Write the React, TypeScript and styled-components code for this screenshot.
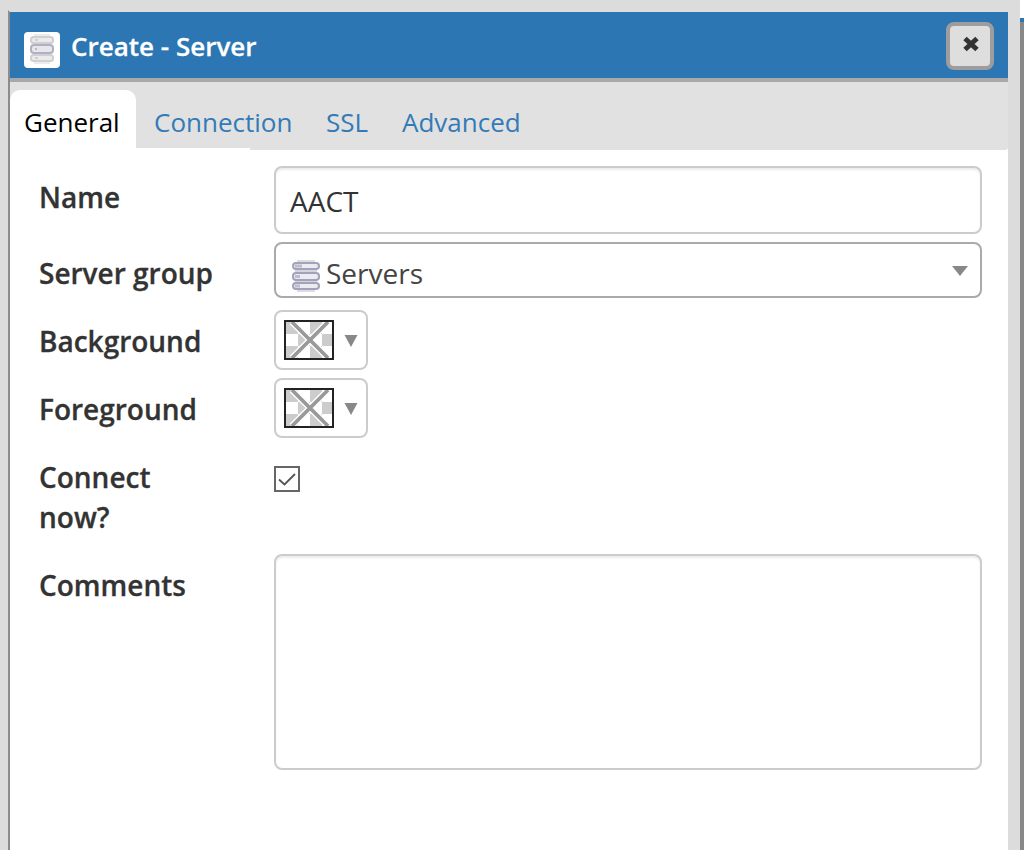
import React from "react";
import styled, { createGlobalStyle } from "styled-components";

const GlobalStyle = createGlobalStyle`
  *, *::before, *::after { box-sizing: border-box; }
  body { margin: 0; background: #dcdcdc; overflow: hidden; }
`;

const Page = styled.div`
  display: flex;
  width: 1024px;
  height: 850px;
  overflow: hidden;
  background: #dcdcdc;
  color: #333;
  font: 28px/40px "Open Sans", "Noto Sans", sans-serif;
`;

const Dialog = styled.section`
  display: flex;
  flex-direction: column;
  width: 1000px;
  margin: 10px 12px 0 8px;
  border-left: 2px solid #8c8c8c;
  border-top: 2px solid #dcdcdc;
  background: #fff;
`;

const Backdrop = styled.div`
  width: 4px;
  background: #888;
  border-top: 18px solid #fff;
`;

const BackdropBar = styled.div`
  height: 4px;
  background: #2c76b4;
`;

const Header = styled.header`
  display: flex;
  align-items: center;
  height: 70px;
  padding: 0 14px;
  background: #2c76b4;
  border-bottom: 4px solid #a9a9a9;
  color: #fff;
`;

const HeaderIcon = styled.span`
  display: flex;
  align-items: flex-start;
  justify-content: center;
  width: 36px;
  height: 36px;
  margin-top: 10px;
  padding-top: 2px;
  border-radius: 4px;
  background: #fff;
`;

const Title = styled.h1`
  flex: 1;
  margin: 2px 0 0 11px;
  font-size: 26px;
  font-weight: 600;
  -webkit-text-stroke: 0.3px currentColor;
`;

const CloseButton = styled.button`
  display: flex;
  align-items: center;
  justify-content: center;
  width: 48px;
  height: 48px;
  margin-top: 2px;
  padding: 0 0 4px 2px;
  border: 4px solid #9d9d9d;
  border-radius: 8px;
  background: #dedede;
`;

const TabBar = styled.nav`
  display: flex;
  align-items: flex-start;
  height: 68px;
  padding-top: 8px;
  background: #e1e1e1;
  border-bottom-right-radius: 3px;
`;

const Tab = styled.a<{ $active?: boolean; $width: number }>`
  width: ${(p) => p.$width}px;
  height: ${(p) => (p.$active ? 60 : 58)}px;
  margin-right: 4px;
  padding: 12px 0 0 14px;
  border-radius: 10px 10px 0 0;
  background: ${(p) => (p.$active ? "#fff" : "transparent")};
  color: ${(p) => (p.$active ? "#000" : "#337ab7")};
  font-size: 26px;
  white-space: nowrap;
`;

const TabUnderline = styled.div`
  width: 240px;
  height: 2px;
  margin-top: -2px;
  background: #fff;
`;

const Form = styled.form`
  display: flex;
  flex-direction: column;
  padding: 16px 26px 0 29px;
`;

const Row = styled.div<{ $height: number }>`
  display: flex;
  align-items: flex-start;
  height: ${(p) => p.$height}px;
`;

const Label = styled.label`
  width: 235px;
  padding: 11px 40px 0 0;
  font-weight: 600;
  -webkit-text-stroke: 0.3px currentColor;
  white-space: pre-line;
`;

const TextField = styled.div<{ $height: number }>`
  flex: 1;
  height: ${(p) => p.$height}px;
  padding: 13px 14px;
  border: 2px solid #ccc;
  border-radius: 8px;
  box-shadow: inset 0 2px 2px rgba(0, 0, 0, 0.075);
`;

const Select = styled.div`
  display: flex;
  flex: 1;
  align-items: center;
  height: 56px;
  padding: 2px 12px 0 16px;
  border: 2px solid #aaa;
  border-radius: 8px;
  color: #444;
`;

const SelectText = styled.span`
  flex: 1;
  margin: 4px 0 0 6px;
`;

const ColorPicker = styled.button`
  display: flex;
  align-items: center;
  width: 94px;
  height: 60px;
  padding: 0 8px;
  border: 2px solid #ccc;
  border-radius: 8px;
  background: #fff;
`;

const PickerArrow = styled.svg`
  margin: 2px 0 0 10px;
`;

const CheckBox = styled.span`
  display: flex;
  align-items: center;
  justify-content: center;
  width: 26px;
  height: 26px;
  margin-top: 20px;
  border: 2px solid #666;
`;

const ServersGlyph = styled.svg`
  display: block;
  margin-top: 10px;
`;

function HeaderServers() {
  return (
    <svg width="26" height="30" viewBox="0 0 26 30" fill="#ebebeb" stroke="#d0d0d0" strokeWidth="2">
      <path d="M5 1h16M5 29h16" stroke="#ececec" />
      <rect x="2" y="3" width="22" height="6" rx="2.5" />
      <rect x="2" y="21" width="22" height="6" rx="2.5" />
      <rect x="2" y="11" width="22" height="8" rx="3" fill="#e6e6ec" stroke="#b0b0c2" />
      <path d="M6 6h3M6 24h3" />
      <path d="M6 15h2" stroke="#b9b9c8" />
    </svg>
  );
}

function ServersIcon() {
  return (
    <ServersGlyph width="28" height="32" viewBox="0 0 28 32" fill="#ececf0" stroke="#a2a2ba" strokeWidth="2">
      <path d="M5 1h18M5 31h18" stroke="#dcdce5" />
      <path d="M3 11h22M3 21.5h22" stroke="#d4d4e0" strokeWidth="3" />
      <rect x="1" y="3" width="26" height="6" rx="3" />
      <rect x="1" y="23" width="26" height="6" rx="3" />
      <rect x="1" y="13" width="26" height="7" rx="3" />
      <path d="M3 6h7M3 16.5h5M3 26h5" stroke="#bdbdcf" strokeWidth="3" />
    </ServersGlyph>
  );
}

function Swatch() {
  return (
    <svg width="50" height="40" viewBox="0 0 50 40">
      <rect width="50" height="40" fill="#222" />
      <rect x="2" y="2" width="46" height="36" fill="#fff" />
      <path d="M2 2h12v12H2zM26 2h12v12H26zM14 14h12v12H14zM38 14h10v12H38zM2 26h12v12H2zM26 26h12v12H26z" fill="#ccc" />
      <path d="M8 2L44 38M44 2L8 38" stroke="#fff" strokeWidth="6.5" />
      <path d="M8 2L44 38M44 2L8 38" stroke="#999" strokeWidth="3.8" />
      <path d="M1 1h48v38H1z" fill="none" stroke="#222" strokeWidth="2" />
    </svg>
  );
}

function ColorControl() {
  return (
    <ColorPicker type="button">
      <Swatch />
      <PickerArrow width="14" height="12" viewBox="0 0 14 12">
        <path d="M0.5 0H13.5L7 12z" fill="#888" />
      </PickerArrow>
    </ColorPicker>
  );
}

export default function App() {
  return (
    <>
      <GlobalStyle />
      <Page>
        <Dialog>
          <Header>
            <HeaderIcon><HeaderServers /></HeaderIcon>
            <Title>Create - Server</Title>
            <CloseButton aria-label="Close">
              <svg width="18" height="16" viewBox="0 0 18 16">
                <path d="M3 2.5L15 13.5M15 2.5L3 13.5" stroke="#333" strokeWidth="5" />
              </svg>
            </CloseButton>
          </Header>
          <TabBar>
            <Tab $active $width={126}>General</Tab>
            <Tab $width={168}>Connection</Tab>
            <Tab $width={72}>SSL</Tab>
            <Tab $width={150}>Advanced</Tab>
          </TabBar>
          <TabUnderline />
          <Form>
            <Row $height={76}>
              <Label>Name</Label>
              <TextField $height={68}>AACT</TextField>
            </Row>
            <Row $height={68}>
              <Label>Server group</Label>
              <Select>
                <ServersIcon />
                <SelectText>Servers</SelectText>
                <svg width="16" height="10" viewBox="0 0 16 10">
                  <path d="M0 0H16L8 10z" fill="#888" />
                </svg>
              </Select>
            </Row>
            <Row $height={68}>
              <Label>Background</Label>
              <ColorControl />
            </Row>
            <Row $height={68}>
              <Label>Foreground</Label>
              <ColorControl />
            </Row>
            <Row $height={108}>
              <Label>{"Connect\nnow?"}</Label>
              <CheckBox>
                <svg width="20" height="18" viewBox="0 0 20 18">
                  <path d="M2 9.5l5.5 5L18 4" fill="none" stroke="#555" strokeWidth="1.8" />
                </svg>
              </CheckBox>
            </Row>
            <Row $height={216}>
              <Label>Comments</Label>
              <TextField $height={216} />
            </Row>
          </Form>
        </Dialog>
        <Backdrop><BackdropBar /></Backdrop>
      </Page>
    </>
  );
}
